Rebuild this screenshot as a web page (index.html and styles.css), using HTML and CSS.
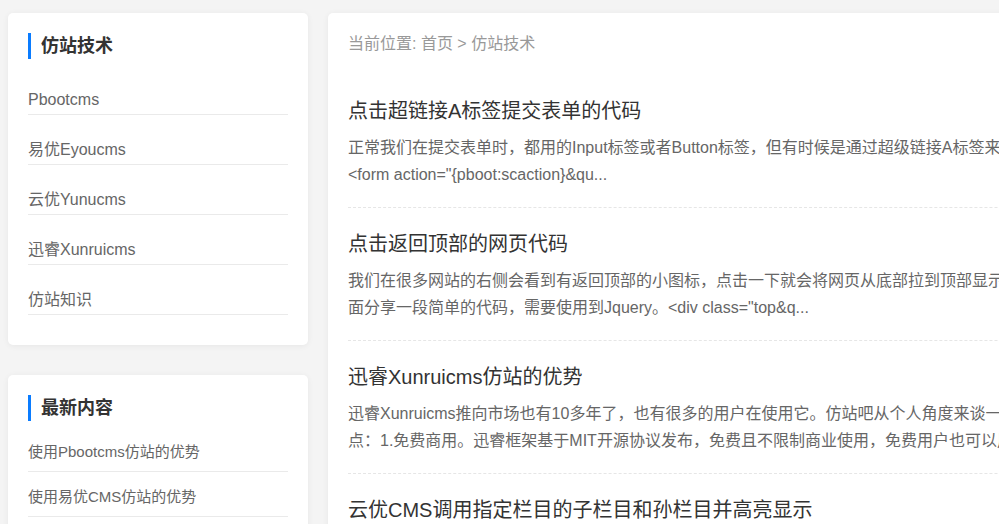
FILE: index.html
```html
<!DOCTYPE html>
<html lang="zh-CN">

<head>
  <meta charset="UTF-8">
  <meta name="viewport" content="width=device-width, initial-scale=1.0">
  <title>仿站技术</title>
  <link rel="stylesheet" href="styles.css">
</head>

<body>
  <div class="wrap">
    <div class="side">
      <div class="side-box">
        <h3 class="side-title">仿站技术</h3>
        <ul class="cate-list">
          <li>Pbootcms</li>
          <li>易优Eyoucms</li>
          <li>云优Yunucms</li>
          <li>迅睿Xunruicms</li>
          <li>仿站知识</li>
        </ul>
      </div>
      <div class="side-box new-box">
        <h3 class="side-title">最新内容</h3>
        <ul class="new-list">
          <li>使用Pbootcms仿站的优势</li>
          <li>使用易优CMS仿站的优势</li>
          <li>使用云优CMS仿站的优势</li>
        </ul>
      </div>
    </div>
    <div class="main-box">
      <div class="crumb">当前位置: 首页 &gt; 仿站技术</div>
      <ul class="art-list">
        <li class="art">
          <h2 class="art-title">点击超链接A标签提交表单的代码</h2>
          <p class="art-desc">正常我们在提交表单时，都用的Input标签或者Button标签，但有时候是通过超级链接A标签来提交表单，代码如下：<br>&lt;form action="{pboot:scaction}&amp;qu...</p>
        </li>
        <li class="art">
          <h2 class="art-title">点击返回顶部的网页代码</h2>
          <p class="art-desc">我们在很多网站的右侧会看到有返回顶部的小图标，点击一下就会将网页从底部拉到顶部显示，下<br>面分享一段简单的代码，需要使用到Jquery。&lt;div class="top&amp;q...</p>
        </li>
        <li class="art">
          <h2 class="art-title">迅睿Xunruicms仿站的优势</h2>
          <p class="art-desc">迅睿Xunruicms推向市场也有10多年了，也有很多的用户在使用它。仿站吧从个人角度来谈一谈它的优<br>点：1.免费商用。迅睿框架基于MIT开源协议发布，免费且不限制商业使用，免费用户也可以用...</p>
        </li>
        <li class="art">
          <h2 class="art-title">云优CMS调用指定栏目的子栏目和孙栏目并高亮显示</h2>
          <p class="art-desc">在做网站的时候，经常会遇到需要调用指定栏目的子栏目和孙栏目，并且让当前栏目高亮显示...</p>
        </li>
      </ul>
    </div>
  </div>
</body>

</html>
```

FILE: styles.css
```css
html,
body {
  overflow: hidden;
}

body {
  margin: 0;
  background-color: #f4f4f4;
  font-family: "Liberation Sans", "Noto Sans CJK SC", sans-serif;
}

ul,
h2,
h3,
p {
  margin: 0;
  padding: 0;
}

ul {
  list-style: none;
}

.wrap {
  width: 1200px;
  padding: 13px 8px;
  display: flex;
  align-items: flex-start;
  gap: 20px;
}

.side {
  width: 300px;
  flex-shrink: 0;
}

.side-box {
  background-color: #fff;
  border-radius: 5px;
  padding: 20px 20px 30px;
  box-shadow: 0 1px 6px rgba(0, 0, 0, 0.06);
}

.new-box {
  margin-top: 30px;
}

.side-title {
  border-left: 3px solid #0a7cff;
  padding-left: 10px;
  font-size: 18px;
  line-height: 26px;
  font-weight: bold;
  color: #333;
}

.cate-list,
.new-list {
  margin-top: 6px;
}

.cate-list li {
  padding-top: 20px;
  line-height: 29px;
  font-size: 16px;
  color: #666;
  border-bottom: 1px solid #eaeaea;
}

.new-list li {
  padding: 10px 0 4px;
  line-height: 30px;
  font-size: 15px;
  color: #666;
  border-bottom: 1px solid #eaeaea;
}

.main-box {
  width: 880px;
  flex-shrink: 0;
  background-color: #fff;
  border-radius: 5px;
  padding: 20px;
  box-shadow: 0 1px 6px rgba(0, 0, 0, 0.06);
}

.crumb {
  font-size: 16px;
  line-height: 22px;
  color: #999;
  margin-bottom: 20px;
}

.art {
  padding: 21px 0 19px;
  border-bottom: 1px dashed #e6e6e6;
}

.art-title {
  font-size: 20px;
  line-height: 30px;
  font-weight: normal;
  color: #333;
  margin-bottom: 8px;
  white-space: nowrap;
}

.art-desc {
  font-size: 16px;
  line-height: 27px;
  color: #666;
  white-space: nowrap;
}
```
